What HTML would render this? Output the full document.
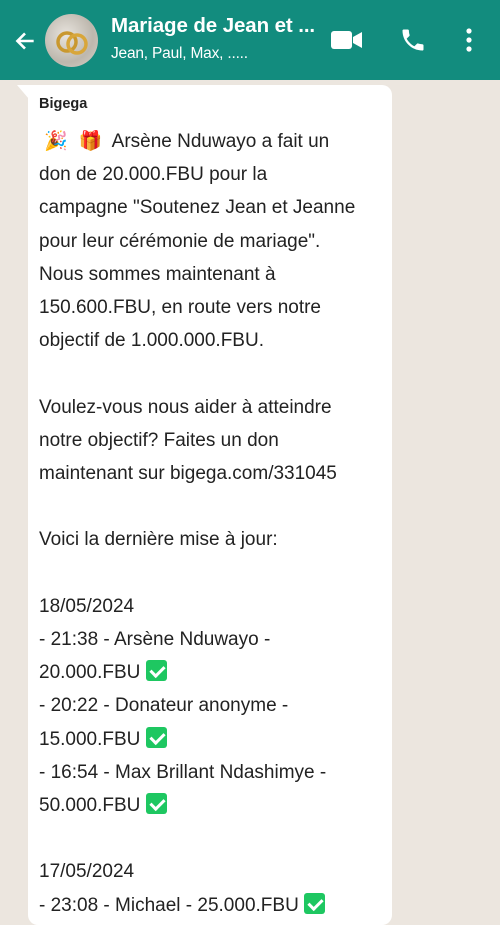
<!DOCTYPE html>
<html><head><meta charset="utf-8"><style>
*{margin:0;padding:0;box-sizing:border-box}
html,body{width:500px;height:912px;overflow:hidden;background:#ece6df;font-family:"Liberation Sans",Roboto,sans-serif}
.hdr{position:absolute;left:0;top:0;width:500px;height:80px;background:#128c7e;color:#fff}
.av{position:absolute;left:45px;top:14px;width:53px;height:53px;border-radius:50%;overflow:hidden;background:radial-gradient(circle at 40% 40%,#e8e4de,#bdb7ad 60%,#d9d2c8)}
.t1{position:absolute;left:111px;top:14px;font-size:20.5px;font-weight:bold;letter-spacing:-0.1px}
.t2{position:absolute;left:111px;top:45px;font-size:15.5px;letter-spacing:-0.2px}
.bub{position:absolute;left:28px;top:85px;width:364px;height:840px;background:#fff;border-radius:0 10px 10px 10px}
.tail{position:absolute;left:17px;top:85px;width:0;height:0;border-top:14px solid #fff;border-left:12px solid transparent}
.nm{position:absolute;left:39px;top:96px;font-size:14.5px;font-weight:bold;color:#222}
.msg{position:absolute;left:39px;top:125px;font-size:19px;line-height:33.2px;color:#222;white-space:pre}
.ck{display:inline-block;width:21px;height:21px;background:#1ec761;border-radius:3px;vertical-align:-3px;position:relative}
.ck:after{content:"";position:absolute;left:7px;top:3px;width:6px;height:11px;border:solid #fff;border-width:0 3px 3px 0;transform:rotate(45deg)}
</style></head><body>
<div class="hdr">
<svg style="position:absolute;left:12px;top:28px" width="26" height="26" viewBox="0 0 24 24"><path d="M20 12H5M12 5l-7 7 7 7" stroke="#fff" stroke-width="2.4" fill="none"/></svg>
<div class="av"><svg width="53" height="53"><circle cx="22" cy="28" r="9" fill="none" stroke="#c9982f" stroke-width="3.5"/><circle cx="32" cy="30" r="9" fill="none" stroke="#d8a63a" stroke-width="3.5"/></svg></div>
<div class="t1">Mariage de Jean et ...</div>
<div class="t2">Jean, Paul, Max, .....</div>
<svg style="position:absolute;left:331px;top:29px" width="32" height="22" viewBox="0 0 32 22"><rect x="0" y="2" width="21" height="18" rx="3" fill="#fff"/><path d="M22 8l9-5v16l-9-5z" fill="#fff"/></svg>
<svg style="position:absolute;left:399px;top:26px" width="28" height="28" viewBox="0 0 24 24"><path d="M6.6 10.8c1.4 2.8 3.8 5.1 6.6 6.6l2.2-2.2c.3-.3.7-.4 1-.2 1.1.4 2.300.6 3.6.6.6 0 1 .4 1 1V20c0 .6-.4 1-1 1C10.6 21 3 13.4 3 4c0-.6.4-1 1-1h3.5c.6 0 1 .4 1 1 0 1.3.2 2.5.6 3.600.1.3 0 .7-.2 1z" fill="#fff"/></svg>
<svg style="position:absolute;left:464px;top:27px" width="10" height="26"><circle cx="5" cy="4" r="2.6" fill="#fff"/><circle cx="5" cy="13" r="2.6" fill="#fff"/><circle cx="5" cy="22" r="2.6" fill="#fff"/></svg>
</div>
<div class="tail"></div>
<div class="bub"></div>
<div class="nm">Bigega</div>
<div class="msg"> 🎉  🎁  Arsène Nduwayo a fait un
don de 20.000.FBU pour la
campagne "Soutenez Jean et Jeanne
pour leur cérémonie de mariage".
Nous sommes maintenant à
150.600.FBU, en route vers notre
objectif de 1.000.000.FBU.

Voulez-vous nous aider à atteindre
notre objectif? Faites un don
maintenant sur bigega.com/331045

Voici la dernière mise à jour:

18/05/2024
- 21:38 - Arsène Nduwayo -
20.000.FBU <span class="ck"></span>
- 20:22 - Donateur anonyme -
15.000.FBU <span class="ck"></span>
- 16:54 - Max Brillant Ndashimye -
50.000.FBU <span class="ck"></span>

17/05/2024
- 23:08 - Michael - 25.000.FBU <span class="ck"></span></div>
</body></html>
